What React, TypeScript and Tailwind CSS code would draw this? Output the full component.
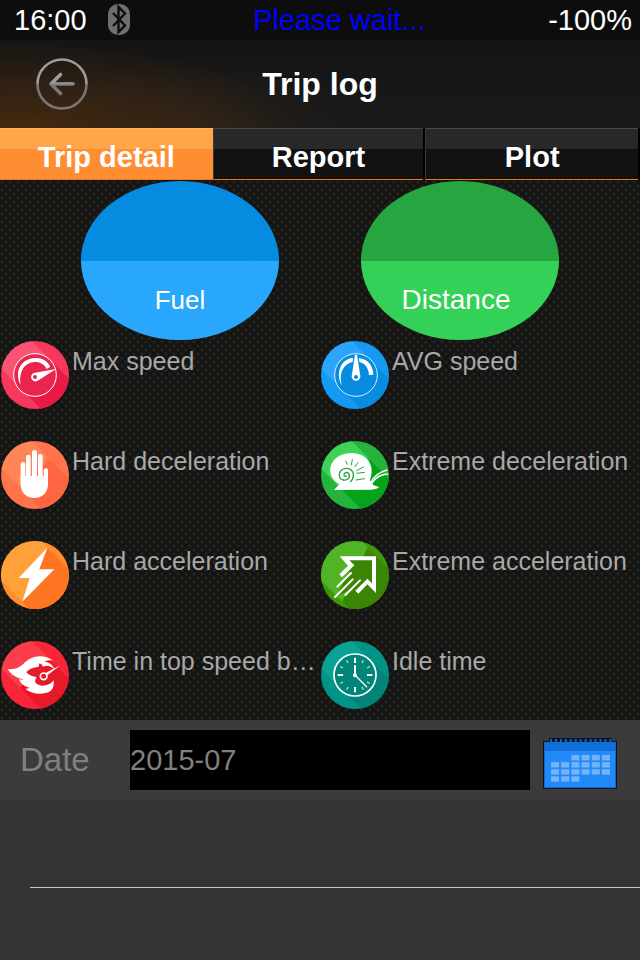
import type { ReactNode } from "react";
import { useState } from "react";

const tabs = ["Trip detail", "Report", "Plot"];

type BadgeProps = {
  id: string;
  colors: [string, string, string];
  wide?: boolean;
  children: ReactNode;
};

// Round badge with a three tone diagonal shade, "wide" puts the shadow band corner to corner
function Badge({ id, colors, wide, children }: BadgeProps) {
  const [light, base, dark] = colors;
  return (
    <svg viewBox="0 0 210 210" className="size-[70px] shrink-0" aria-hidden="true">
      <clipPath id={id}>
        <circle cx="105" cy="105" r="102" />
      </clipPath>
      <g clipPath={`url(#${id})`}>
        <rect width="210" height="210" fill={base} />
        <path
          d={wide ? "M0 0H122L145 23L67 185L0 118Z" : "M0 0H92L145 53L60 143L0 83Z"}
          fill={light}
        />
        <path
          d={wide ? "M142 23L210 91V210H92L67 185Z" : "M150 60L210 120V210H127L60 143Z"}
          fill={dark}
        />
      </g>
      {children}
    </svg>
  );
}

function MaxSpeedIcon() {
  return (
    <Badge id="max-speed" colors={["#fb5373", "#f6375e", "#e91a45"]}>
      <circle cx="105" cy="105" r="64" fill="#e9244d" stroke="#fff" strokeWidth="3" />
      <path
        d="M61 134C42 91 65 56 105 54C126 53 142 62 151 80L140 87C132 71 119 65 104 66C75 67 57 91 61 134Z"
        fill="#fff"
      />
      <path d="M168 87L112 123A13 13 0 1 1 101 99Z" fill="#fff" />
      <circle cx="105" cy="111" r="6" fill="#e9244d" />
    </Badge>
  );
}

function AvgSpeedIcon() {
  return (
    <Badge id="avg-speed" colors={["#2aa5fb", "#149af3", "#078cdf"]}>
      <circle cx="108" cy="105" r="64" fill="#078cdf" stroke="#d3edff" strokeWidth="3" />
      <path
        d="M65 136C45 98 64 56 99 54L98 66C70 72 56 99 65 136Z"
        fill="#fff"
      />
      <path d="M117 54C143 57 160 77 160 104L147 105C146 84 135 70 118 66Z" fill="#fff" />
      <path d="M105 44H111L121 109A13 13 0 1 1 95 109Z" fill="#fff" />
      <circle cx="108" cy="111" r="6" fill="#078cdf" />
    </Badge>
  );
}

function HandIcon() {
  return (
    <Badge id="hand" colors={["#ff8557", "#ff744c", "#ff6541"]}>
      <g fill="#fff">
        <rect x="62" y="66" width="14" height="75" rx="7" />
        <rect x="78" y="44" width="14" height="75" rx="7" />
        <rect x="96" y="30" width="15" height="85" rx="7" />
        <rect x="114" y="42" width="14" height="75" rx="7" />
        <rect x="131" y="85" width="13" height="55" rx="6" />
        <path d="M62 108H131V112H144V132C144 158 127 174 103 174S62 158 62 132Z" />
      </g>
    </Badge>
  );
}

function SnailIcon() {
  return (
    <Badge id="snail" colors={["#3dd455", "#24b43b", "#05a21b"]}>
      <path
        d="M42 150L58 133C36 122 25 98 33 76C43 49 70 38 97 39C130 40 155 62 155 92C155 104 152 112 150 121C154 126 156 132 160 135L178 142C172 147 162 148 157 149Z"
        fill="#fff"
      />
      <path
        d="M152 128C163 105 180 96 201 90M156 129C167 113 183 103 202 102"
        fill="none"
        stroke="#fff"
        strokeWidth="4"
        strokeLinecap="round"
      />
      <g fill="none" stroke="#24a43b" strokeWidth="4" strokeLinecap="round">
        <path d="M91 125C102 117 104 97 92 89C79 80 59 88 58 103C57 119 73 125 84 116C93 108 86 95 77 98C69 101 71 111 79 109" />
        <path
          d="M77 63L82 73M97 59L94 75M114 68L104 81M130 81L110 92M133 97L110 100M134 116L108 120"
          strokeWidth="3"
        />
      </g>
    </Badge>
  );
}

function BoltIcon() {
  return (
    <Badge id="bolt" colors={["#ffa03b", "#ff8c2e", "#ff7622"]} wide>
      <path d="M142 23L56 114H89L67 185L163 88H118Z" fill="#fff" />
    </Badge>
  );
}

function ArrowIcon() {
  return (
    <Badge id="arrow" colors={["#53b327", "#3f970b", "#3b8504"]} wide>
      <path d="M79 56L161 56V141L141 124L46 172L99 76Z" fill="#3b8504" />
      <path d="M59 49H168V159L142 133L115 161L106 152L142 116L156 130V61H88L103 76L66 112L58 103L84 77Z" fill="#fff" />
      <path
        d="M52 140L93 99M45 171L98 118M76 165L120 121"
        fill="none"
        stroke="#fff"
        strokeWidth="6"
        strokeLinecap="round"
      />
    </Badge>
  );
}

function FlameIcon() {
  return (
    <Badge id="flame" colors={["#fc3d4c", "#f92538", "#e71a29"]}>
      <path d="M79 97L118 70L160 85V120L145 135L108 130Z" fill="#e71a29" />
      <path
        d="M23 87C43 90 58 83 70 72C90 50 125 38 160 62C148 59 139 61 133 66C147 66 159 74 163 88C153 78 140 74 129 80C126 74 122 70 117 71C118 76 117 79 114 81C98 82 84 89 79 97C84 103 94 109 110 112C104 119 104 126 108 130C122 143 150 137 161 121C163 140 156 153 145 157C123 165 92 161 77 146C81 145 86 145 89 143C74 140 62 131 57 117C63 120 67 121 72 120C55 114 34 107 23 87Z"
        fill="#fff"
      />
      <path d="M182 75L139 108L133 101Z" fill="#fff" />
      <circle cx="131" cy="109" r="10" fill="#e71a29" stroke="#fff" strokeWidth="5" />
    </Badge>
  );
}

function ClockIcon() {
  return (
    <Badge id="clock" colors={["#09a294", "#009486", "#008578"]}>
      <circle cx="105" cy="105" r="63" fill="#008578" stroke="#fff" strokeWidth="5" />
      <g stroke="#fff">
        <path d="M105 53V69M105 141V157M53 105H69M141 105H157" strokeWidth="6" />
        <path
          d="M80 61L84 69M130 61L126 69M61 80L69 84M149 80L141 84M61 130L69 126M149 130L141 126M80 149L84 141M130 149L126 141"
          strokeWidth="4"
          opacity="0.7"
        />
        <path d="M105 76V105" strokeWidth="6" />
        <path d="M105 105L141 142" strokeWidth="4" />
      </g>
      <circle cx="105" cy="106" r="6" fill="#fff" />
    </Badge>
  );
}

const stats = [
  { label: "Max speed", icon: <MaxSpeedIcon /> },
  { label: "AVG speed", icon: <AvgSpeedIcon /> },
  { label: "Hard deceleration", icon: <HandIcon /> },
  { label: "Extreme deceleration", icon: <SnailIcon /> },
  { label: "Hard acceleration", icon: <BoltIcon /> },
  { label: "Extreme acceleration", icon: <ArrowIcon /> },
  { label: "Time in top speed b…", icon: <FlameIcon /> },
  { label: "Idle time", icon: <ClockIcon /> },
];

function BluetoothIcon() {
  return (
    <svg viewBox="0 0 24 32" className="h-8 w-6" aria-label="Bluetooth">
      <rect x="1" y="0" width="22" height="31" rx="10" fill="#6e6e6e" />
      <path
        d="M6 9L18 21.5L11.5 28V3L18 9.5L6 22"
        fill="none"
        stroke="#0d0d0d"
        strokeWidth="2.4"
      />
    </svg>
  );
}

function BackIcon() {
  return (
    <svg viewBox="0 0 52 52" className="size-[52px]" aria-hidden="true">
      <linearGradient id="back" x1="0" y1="0" x2="0" y2="52" gradientUnits="userSpaceOnUse">
        <stop offset="0.48" stopColor="#9d9d9d" />
        <stop offset="0.52" stopColor="#777" />
      </linearGradient>
      <g fill="none" stroke="url(#back)">
        <circle cx="26" cy="26" r="24.5" strokeWidth="2.6" />
        <path
          d="M24.5 16.5L15 26L24.5 35.5M15 26L37 26.01"
          strokeWidth="3.6"
          strokeLinecap="round"
          strokeLinejoin="round"
        />
      </g>
    </svg>
  );
}

// first and last filled column of each calendar row
const calendarRows = [
  [2, 5],
  [0, 5],
  [0, 5],
  [0, 2],
];

function CalendarIcon() {
  return (
    <svg viewBox="0 0 74 52" className="h-[52px] w-[74px]" aria-hidden="true">
      <path d="M0 4H6V1H69V4H74V52H0Z" fill="#04142a" />
      <rect x="1" y="5" width="72" height="46" fill="#1567c4" />
      <rect x="2" y="5" width="70" height="9" fill="#1170d6" />
      <rect x="2" y="14" width="70" height="36" fill="#228af8" />
      {Array.from({ length: 13 }, (_, i) => (
        <rect key={i} x={7 + i * 4.95} y="2" width="2" height="3.5" fill="#1565c0" />
      ))}
      {calendarRows.map(([from, to], row) =>
        Array.from({ length: to - from + 1 }, (_, i) => (
          <rect
            key={`${row}-${i}`}
            x={8 + (from + i) * 10.2}
            y={18 + row * 7.1}
            width="8"
            height="5.4"
            fill="#74b3f9"
          />
        )),
      )}
    </svg>
  );
}

export default function App() {
  const [active, setActive] = useState(0);
  const [date, setDate] = useState("2015-07");

  return (
    <div className="flex min-h-screen flex-col bg-[#333] font-['Liberation_Sans',Arial,sans-serif] text-white">
      <div className="flex h-10 items-center justify-between bg-[#0d0d0d] pr-2 pl-3.5 text-[29px] leading-10">
        <div className="flex items-center gap-5">
          <span>16:00</span>
          <BluetoothIcon />
        </div>
        <span className="whitespace-nowrap text-[#0000ff]">Please wait...</span>
        <span>-100%</span>
      </div>

      <header className="grid h-22 grid-cols-[1fr_auto_1fr] items-center bg-[#171717] bg-[radial-gradient(ellipse_260px_90px_at_20px_100%,#45290f,transparent),radial-gradient(ellipse_150px_70px_at_190px_100%,#3a291880,transparent),linear-gradient(#141414,#1a1a1a)] px-9">
        <button type="button" aria-label="Back" className="justify-self-start">
          <BackIcon />
        </button>
        <h1 className="text-[32px] leading-10 font-bold">Trip log</h1>
      </header>

      <nav className="grid h-13 grid-cols-3 bg-black pr-0.5">
        {tabs.map((tab, i) => (
          <button
            key={tab}
            type="button"
            onClick={() => setActive(i)}
            className={
              i === active
                ? "border-t border-b border-t-[#ffb061] border-b-[#ec7a1c] bg-linear-to-b from-[#ffa54a] from-40% to-[#ff8d32] to-40% pt-1.5 text-[29px] leading-10 font-bold"
                : "border-t border-b border-l border-t-[#484848] border-b-[#ec7a1c] border-l-[#3a3a3a] bg-linear-to-b from-[#282828] from-40% to-[#111] to-40% pt-1.5 text-[29px] leading-10 font-bold not-last:mr-0.5"
            }
          >
            {tab}
          </button>
        ))}
      </nav>

      <main className="h-[540px] bg-[#141412] bg-[radial-gradient(circle_at_2px_2px,#242422_1px,transparent_2px),radial-gradient(circle_at_6px_6px,#242422_1px,transparent_2px)] bg-size-[8px_8px]">
        <div className="grid grid-cols-2 justify-items-center pt-px">
          <div className="ml-10 flex h-[159px] w-[198px] items-end justify-center rounded-[50%] bg-linear-to-b from-[#058bdf] from-50% to-[#29a7fc] to-50% pb-5 text-[26px] leading-10">
            Fuel
          </div>
          <div className="mr-10 flex h-[159px] w-[198px] items-end justify-center rounded-[50%] bg-linear-to-b from-[#26a540] from-50% to-[#33d158] to-50% pr-2 pb-5 text-[28px] leading-10">
            Distance
          </div>
        </div>
        <ul className="grid auto-rows-[100px] grid-cols-2">
          {stats.map(({ label, icon }) => (
            <li key={label} className="flex items-start gap-0.5">
              {icon}
              <span className="pt-[5px] text-[25px] leading-8 whitespace-nowrap text-[#a8a8a8]">
                {label}
              </span>
            </li>
          ))}
        </ul>
      </main>

      <div className="flex h-20 items-center bg-[#3b3b3b] pl-5 text-[#808080]">
        <label htmlFor="date" className="w-[110px] text-[33px] leading-10">
          Date
        </label>
        <input
          id="date"
          value={date}
          onChange={(e) => setDate(e.target.value)}
          className="h-15 min-w-0 flex-1 bg-black text-[29px] outline-none"
        />
        <button type="button" aria-label="Pick a date" className="mr-[23px] ml-[13px] pt-1.5">
          <CalendarIcon />
        </button>
      </div>

      <div className="ml-[30px] h-22 border-b border-[#c8c8c8]" />
    </div>
  );
}
